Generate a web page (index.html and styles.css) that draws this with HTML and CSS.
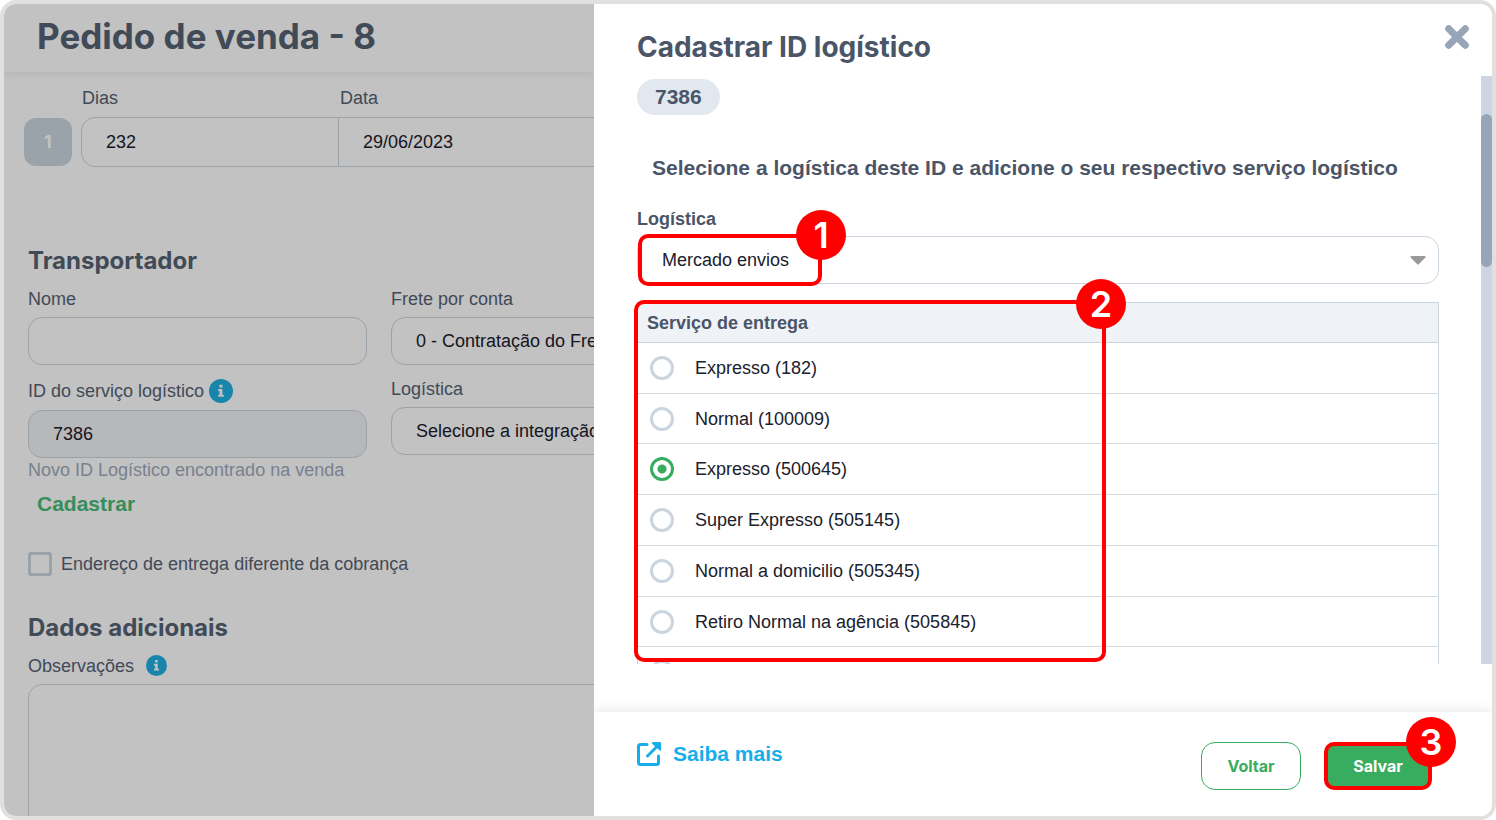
FILE: index.html
```html
<!DOCTYPE html>
<html lang="pt-BR">
<head>
<meta charset="utf-8">
<meta name="viewport" content="width=device-width, initial-scale=1">
<title>Pedido de venda - 8</title>
<link rel="stylesheet" href="styles.css">
</head>
<body>
<div class="frame">
  <main class="page">
    <header class="page-header"><h1 class="page-title">Pedido de venda - 8</h1></header>
    <div class="installment">
      <span class="installment-number">1</span>
      <div class="field installment-days">
        <label for="dias">Dias</label>
        <input class="input" id="dias" type="text" value="232">
      </div>
      <div class="field installment-date">
        <label for="data">Data</label>
        <input class="input" id="data" type="text" value="29/06/2023">
      </div>
    </div>
    <section class="section">
      <h2 class="section-title">Transportador</h2>
      <div class="columns">
        <div class="column">
          <div class="field">
            <label for="nome">Nome</label>
            <input class="input" id="nome" type="text">
          </div>
          <div class="field">
            <div class="label-row">
              <label for="id-servico">ID do serviço logístico</label>
              <svg class="info" viewBox="0 0 24 24" aria-hidden="true"><circle cx="12" cy="12" r="12"/><path d="M10.4 5.8h3.1v2.8h-3.1zM9.2 10.1h4.2v5.6h1.4v2.1H9.2v-2.1h1.3v-3.5H9.2z"/></svg>
            </div>
            <input class="input input-readonly" id="id-servico" type="text" value="7386" readonly>
            <p class="help">Novo ID Logístico encontrado na venda</p>
          </div>
          <a class="register-link" href="#cadastrar">Cadastrar</a>
        </div>
        <div class="column">
          <div class="field">
            <label for="frete">Frete por conta</label>
            <select class="input" id="frete"><option>0 - Contratação do Frete por conta do Remetente</option></select>
          </div>
          <div class="field">
            <label for="logistica-venda">Logística</label>
            <select class="input" id="logistica-venda"><option>Selecione a integração logística</option></select>
          </div>
        </div>
      </div>
      <label class="check"><input class="checkbox" type="checkbox">Endereço de entrega diferente da cobrança</label>
    </section>
    <section class="section section-notes">
      <h2 class="section-title">Dados adicionais</h2>
      <div class="label-row notes-label">
        <label for="obs">Observações</label>
        <svg class="info info-small" viewBox="0 0 24 24" aria-hidden="true"><circle cx="12" cy="12" r="12"/><path d="M10.4 5.8h3.1v2.8h-3.1zM9.2 10.1h4.2v5.6h1.4v2.1H9.2v-2.1h1.3v-3.5H9.2z"/></svg>
      </div>
      <textarea class="notes" id="obs"></textarea>
    </section>
  </main>

  <aside class="drawer" role="dialog" aria-labelledby="drawer-title">
    <header class="drawer-header">
      <h2 class="drawer-title" id="drawer-title">Cadastrar ID logístico</h2>
      <button class="close" type="button" aria-label="Fechar">
        <svg viewBox="0 0 24 24" aria-hidden="true"><path d="M3.700 3.700L20.300 20.300M20.300 3.700L3.700 20.300"/></svg>
      </button>
    </header>
    <div class="drawer-main">
      <div class="drawer-body">
        <span class="pill">7386</span>
        <p class="lead">Selecione a logística deste ID e adicione o seu respectivo serviço logístico</p>
        <label class="strong-label" for="logistica">Logística</label>
        <div class="select-wrap">
          <select class="input" id="logistica"><option>Mercado envios</option></select>
          <svg class="caret" viewBox="0 0 16 9" aria-hidden="true"><path d="M1.500 0h13Q16 0 15.400 1.500L9 8Q8 9 7 8L.6 1.500Q0 0 1.500 0z"/></svg>
          <div class="mark mark-select"><span class="step">1</span></div>
        </div>
        <div class="table-wrap">
          <table class="services">
            <thead><tr><th colspan="2" scope="col">Serviço de entrega</th></tr></thead>
            <tbody>
              <tr><td class="pick"><input class="radio" type="radio" name="servico" id="s1"></td><td><label for="s1">Expresso (182)</label></td></tr>
              <tr><td class="pick"><input class="radio" type="radio" name="servico" id="s2"></td><td><label for="s2">Normal (100009)</label></td></tr>
              <tr><td class="pick"><input class="radio" type="radio" name="servico" id="s3" checked></td><td><label for="s3">Expresso (500645)</label></td></tr>
              <tr><td class="pick"><input class="radio" type="radio" name="servico" id="s4"></td><td><label for="s4">Super Expresso (505145)</label></td></tr>
              <tr><td class="pick"><input class="radio" type="radio" name="servico" id="s5"></td><td><label for="s5">Normal a domicilio (505345)</label></td></tr>
              <tr><td class="pick"><input class="radio" type="radio" name="servico" id="s6"></td><td><label for="s6">Retiro Normal na agência (505845)</label></td></tr>
              <tr><td class="pick"><input class="radio" type="radio" name="servico" id="s7" aria-label="Outro serviço"></td><td></td></tr>
            </tbody>
          </table>
          <div class="mark mark-table"><span class="step step-inset">2</span></div>
        </div>
      </div>
      <div class="scrollbar"><div class="scroll-thumb"></div></div>
    </div>
    <footer class="drawer-footer">
      <a class="learn-more" href="#saiba-mais">
        <svg viewBox="0 0 24 24" aria-hidden="true"><path class="link-box" d="M10 2.500H3.500Q1.500 2.500 1.500 4.500V20.500Q1.500 22.500 3.500 22.500H19.500Q21.500 22.500 21.500 20.500V14"/><path class="link-shaft" d="M10.500 14L20 4.500"/><path class="link-head" d="M15 1Q15.200 0 16.200 0H23Q24 0 24 1V7.800Q24 9.500 22.700 8.600L15.400 2Q15 1.600 15 1z"/></svg>
        Saiba mais
      </a>
      <div class="actions">
        <button class="button button-outline" type="button">Voltar</button>
        <div class="save-wrap">
          <button class="button button-primary" type="button">Salvar</button>
          <span class="step step-inset">3</span>
        </div>
      </div>
    </footer>
  </aside>
</div>
</body>
</html>
```
FILE: styles.css
```css
:root {
  --slate: #4a5568;
  --line: #cbd5e0;
  --ink: #1a202c;
  --green: #38ad60;
  --red: #ff0000;
  --display: Inter, "Open Sans", sans-serif;
}
* { box-sizing: border-box; }
body {
  margin: 0;
  background: #fff;
  color: var(--slate);
  font: 18px/20px "Liberation Sans", Arial, sans-serif;
}
h1, h2, p { margin: 0; }
input, select, textarea, button { font: inherit; margin: 0; }
a { text-decoration: none; }

.frame {
  display: flex;
  height: 100vh;
  border: 4px solid #e0e0e0;
  border-radius: 16px;
  overflow: hidden;
}

/* Order page behind the drawer */
.page {
  position: relative;
  flex: 1;
  min-width: 0;
  overflow: hidden;
  background: #fff;
  color: #566273;
}
.page::after {
  content: "";
  position: absolute;
  inset: 0;
  background: rgba(0, 0, 0, 0.24);
}
.page-header {
  padding: 12px 33px 16px;
  box-shadow: 0 2px 8px rgba(0, 0, 0, 0.08);
}
.page-title { font: 700 35px/40px var(--display); }
.installment {
  display: grid;
  grid-template-columns: 48px 258px 1fr;
  align-items: end;
  padding: 16px 0 0 20px;
}
.installment-number {
  height: 48px;
  margin-bottom: 1px;
  border-radius: 12px;
  background: var(--line);
  color: #fff;
  font: 700 18px/48px var(--display);
  text-align: center;
}
.installment-days { margin-left: 9px; margin-right: -9px; }
.installment-date { margin-left: 9px; }
.installment .field { gap: 9px; }
.installment label { padding-left: 1px; }
.installment .input { height: 50px; }
.installment-days .input { border-radius: 14px 0 0 14px; }
.installment-date .input { border-left: 0; border-right: 0; border-radius: 0; }

.section { padding: 80px 0 0 24px; }
.section-notes { padding-top: 38px; }
.section-title { font: 700 24px/28px var(--display); }
.columns {
  display: grid;
  grid-template-columns: 339px 339px;
  gap: 24px;
  margin-top: 14px;
}
.column, .field { display: flex; flex-direction: column; }
.column { gap: 14px; }
.field { gap: 8px; }
.label-row { display: flex; align-items: center; gap: 5px; height: 23px; }
.info { width: 24px; height: 24px; fill: #20b0e2; }
.info path { fill: #fff; }
.info-small { width: 21px; height: 21px; }
.notes-label { gap: 12px; margin: 12px 0 7px; }

.input {
  width: 100%;
  height: 48px;
  padding: 0 24px;
  border: 1px solid var(--line);
  border-radius: 14px;
  background: #fff;
  color: var(--ink);
  appearance: none;
}
.input-readonly { background: #f0f2f5; }
.help { margin-top: -6px; color: #a0aabb; line-height: 20px; }
.register-link {
  align-self: flex-start;
  padding-left: 9px;
  color: #48bb78;
  font-size: 21px;
  font-weight: bold;
  line-height: 20px;
}
.check { display: flex; align-items: center; gap: 9px; margin-top: 38px; }
.checkbox {
  width: 24px;
  height: 24px;
  border: 3px solid var(--line);
  border-radius: 3px;
  background: #fff;
  appearance: none;
}
.notes {
  display: block;
  width: 800px;
  height: 240px;
  border: 1px solid var(--line);
  border-radius: 14px;
  background: #fff;
  resize: none;
}

/* Drawer */
.drawer {
  display: flex;
  flex-direction: column;
  width: 60.35%;
  background: #fff;
}
.drawer-header {
  display: flex;
  justify-content: space-between;
  align-items: flex-start;
  padding: 21px 23px 9px 43px;
}
.drawer-title { padding-top: 2px; font: 700 28px/40px var(--display); }
.close {
  width: 24px;
  height: 24px;
  padding: 0;
  border: 0;
  background: none;
}
.close svg { display: block; width: 24px; height: 24px; stroke: #98a5b9; stroke-width: 7; stroke-linecap: round; }
.drawer-main { display: flex; flex: 1; min-height: 0; margin-bottom: 48px; }
.drawer-body { flex: 1; min-width: 0; padding: 3px 42px 0 43px; overflow: hidden; }
.pill {
  display: block;
  width: fit-content;
  padding: 0 18px;
  border-radius: 18px;
  background: #e2e8f0;
  font-size: 21px;
  font-weight: bold;
  line-height: 36px;
}
.lead { margin: 41px 0 0 15px; font-size: 21px; font-weight: bold; line-height: 24px; }
.strong-label { display: block; margin-top: 29px; font-weight: bold; }
.select-wrap { position: relative; margin-top: 7px; }
.select-wrap .input { display: block; }
.caret { position: absolute; top: 20px; right: 13px; width: 16px; height: 9px; fill: #999; }
.mark { position: absolute; border: 4px solid var(--red); border-radius: 10px; pointer-events: none; }
.mark-select { top: -2px; left: 1px; width: 184px; height: 52px; }
.table-wrap { position: relative; margin-top: 18px; }
.mark-table { top: -2px; left: -3px; width: 472px; height: 362px; }
.step {
  position: absolute;
  top: -28px;
  right: -28px;
  width: 50px;
  height: 50px;
  border-radius: 50%;
  background: var(--red);
  color: #fff;
  font: 600 36px/50px Inter, sans-serif;
  text-align: center;
}
.step-inset { top: -25px; right: -24px; }
.services {
  width: 100%;
  border: 1px solid var(--line);
  border-spacing: 0;
  color: var(--ink);
}
.services th {
  height: 40px;
  padding: 0 9px;
  border-bottom: 1px solid var(--line);
  background: #eff3f8;
  color: var(--slate);
  text-align: left;
}
.services td { height: 51px; padding: 0; border-bottom: 1px solid #d8dbdf; }
.services tbody tr:nth-child(4n + 2) td { height: 50px; }
.services .pick { width: 57px; padding-left: 12px; }
.radio {
  display: block;
  width: 24px;
  height: 24px;
  border: 3px solid var(--line);
  border-radius: 50%;
  background: #fff;
  appearance: none;
}
.radio:checked { border-color: var(--green); background: radial-gradient(circle, var(--green) 4px, #fff 5px); }
.scrollbar { width: 11px; padding-top: 38px; background: #cdd5e1; }
.scroll-thumb { height: 153px; border-radius: 6px; background: #98a5b9; }

.drawer-footer {
  display: flex;
  justify-content: space-between;
  align-items: flex-start;
  padding: 30px 60px 26px 43px;
  box-shadow: 0 -2px 10px rgba(0, 0, 0, 0.09);
}
.learn-more {
  display: flex;
  align-items: center;
  gap: 12px;
  color: #16aeea;
  font-size: 21px;
  font-weight: bold;
  line-height: 24px;
}
.learn-more svg { width: 24px; height: 24px; fill: none; stroke: #16aeea; stroke-linecap: round; }
.link-box, .link-shaft { stroke-width: 3; }
.learn-more .link-head { fill: #16aeea; stroke: none; }
.actions { display: flex; gap: 23px; }
.button {
  display: block;
  height: 48px;
  padding: 0 20px;
  border: 1px solid var(--green);
  border-radius: 14px;
  background: #fff;
  color: var(--green);
  font: 700 16px/24px var(--display);
}
.button-outline { min-width: 100px; }
.save-wrap { position: relative; }
.button-primary { min-width: 108px; border: 4px solid var(--red); border-radius: 10px; background: var(--green); color: #fff; }
```
